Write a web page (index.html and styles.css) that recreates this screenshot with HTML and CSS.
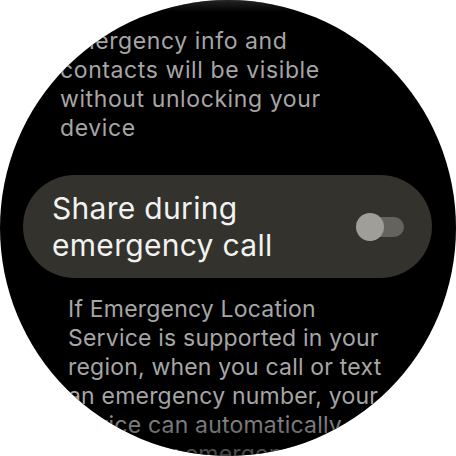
FILE: index.html
```html
<!DOCTYPE html>
<html>
<head>
<meta charset="utf-8">
<link rel="stylesheet" href="styles.css">
</head>
<body>
<div class="screen">
  <div class="list">
    <p class="desc desc-top">Emergency info and contacts will be visible without unlocking your device</p>
    <div class="chip">
      <div class="chip-label">Share during emergency call</div>
      <div class="toggle"><span class="track"></span><span class="thumb"></span></div>
    </div>
    <p class="desc desc-bottom">If Emergency Location Service is supported in your region, when you call or text an emergency number, your device can automatically send your emergency location</p>
  </div>
  <div class="fade"></div>
</div>
</body>
</html>
```
FILE: styles.css
```css
html, body {
  margin: 0;
  padding: 0;
  background: #ffffff;
}
.screen {
  position: relative;
  width: 456px;
  height: 456px;
  border-radius: 50%;
  background: #000000;
  overflow: hidden;
  font-family: Inter, Roboto, "Noto Sans", sans-serif;
}
.list {
  display: flex;
  flex-direction: column;
}
.desc {
  margin: 0;
  color: #a6a6a6;
  font-size: 23px;
  line-height: 29px;
  letter-spacing: 0.2px;
}
.desc-top {
  margin-top: 27px;
  padding-left: 60px;
  width: 285px;
  letter-spacing: 0.6px;
}
.chip {
  margin: 32px 24px 0 23px;
  height: 103px;
  border-radius: 52px;
  background: #33322d;
  display: flex;
  align-items: center;
  justify-content: space-between;
  padding: 0 28px 0 29px;
}
.chip-label {
  color: #f2f2f2;
  font-size: 30px;
  line-height: 37px;
  letter-spacing: 0.3px;
  width: 270px;
}
.toggle {
  position: relative;
  width: 48px;
  height: 28px;
}
.track {
  position: absolute;
  right: 0;
  top: 4px;
  width: 36px;
  height: 20px;
  border-radius: 10px;
  background: #65635d;
}
.thumb {
  position: absolute;
  left: 0;
  top: 0;
  width: 28px;
  height: 28px;
  border-radius: 50%;
  background: #a09e98;
}
.desc-bottom {
  margin-top: 17px;
  padding-left: 68px;
  width: 320px;
  line-height: 29px;
}
.fade {
  position: absolute;
  left: 0;
  top: 0;
  width: 456px;
  height: 456px;
  background: linear-gradient(to bottom, rgba(60,60,60,0.6) 0px, rgba(0,0,0,0) 12px, rgba(0,0,0,0) 400px, rgba(0,0,0,0.6) 456px);
  pointer-events: none;
}
```
